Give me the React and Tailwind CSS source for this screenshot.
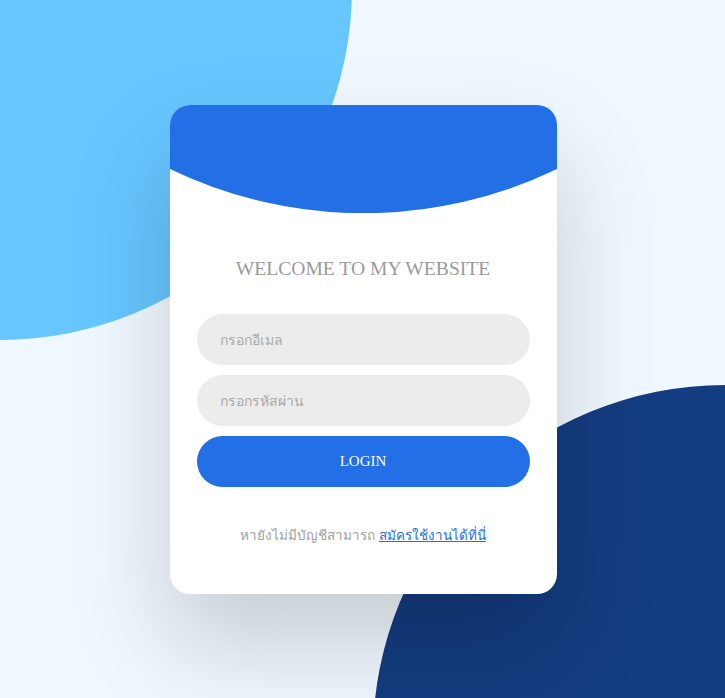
export default function App() {
  return (
    <div className="relative flex h-[698px] w-full items-center justify-center overflow-hidden bg-[#f0f8ff]">
      {/* background blobs */}
      <div className="absolute left-[-352px] top-[-364px] h-[704px] w-[704px] rounded-full bg-[#67c6ff]" />
      <div className="absolute left-[373px] top-[385px] h-[704px] w-[704px] rounded-full bg-[#143c80]" />

      <div className="relative ml-px flex h-[489px] w-[387px] flex-col overflow-hidden rounded-[20px] bg-white shadow-[0_50px_100px_rgba(0,0,0,0.18)]">
        <svg className="block" width="387" height="108" viewBox="0 0 387 108">
          <path d="M0 0 H387 V64 A445 445 0 0 1 0 64 Z" fill="#226fe6" />
        </svg>

        <h1 className="mt-[42px] text-center font-['Liberation_Serif',serif] text-[19.6px] leading-[28px] text-[#9a9a9a]">
          WELCOME TO MY WEBSITE
        </h1>

        <form className="mt-[31px] flex flex-col gap-[10px] px-[27px]">
          <input
            type="email"
            placeholder="กรอกอีเมล"
            className="h-[51px] rounded-full bg-[#ececec] px-[23px] font-['Tahoma','Noto_Sans',sans-serif] text-[14px] text-gray-700 outline-none placeholder:text-[#a8a8a8]"
          />
          <input
            type="password"
            placeholder="กรอกรหัสผ่าน"
            className="h-[51px] rounded-full bg-[#ececec] px-[23px] font-['Tahoma','Noto_Sans',sans-serif] text-[14px] text-gray-700 outline-none placeholder:text-[#a8a8a8]"
          />
          <button
            type="button"
            className="h-[51px] rounded-full bg-[#226fe6] font-['Liberation_Serif',serif] text-[15px] text-white"
          >
            LOGIN
          </button>
        </form>

        <p className="mt-[38px] text-center font-['Tahoma','Noto_Sans',sans-serif] text-[13.5px] text-[#a0a0a0]">
          หายังไม่มีบัญชีสามารถ{" "}
          <a href="#" className="text-[#226fe6] underline">
            สมัครใช้งานได้ที่นี่
          </a>
        </p>
      </div>
    </div>
  );
}
